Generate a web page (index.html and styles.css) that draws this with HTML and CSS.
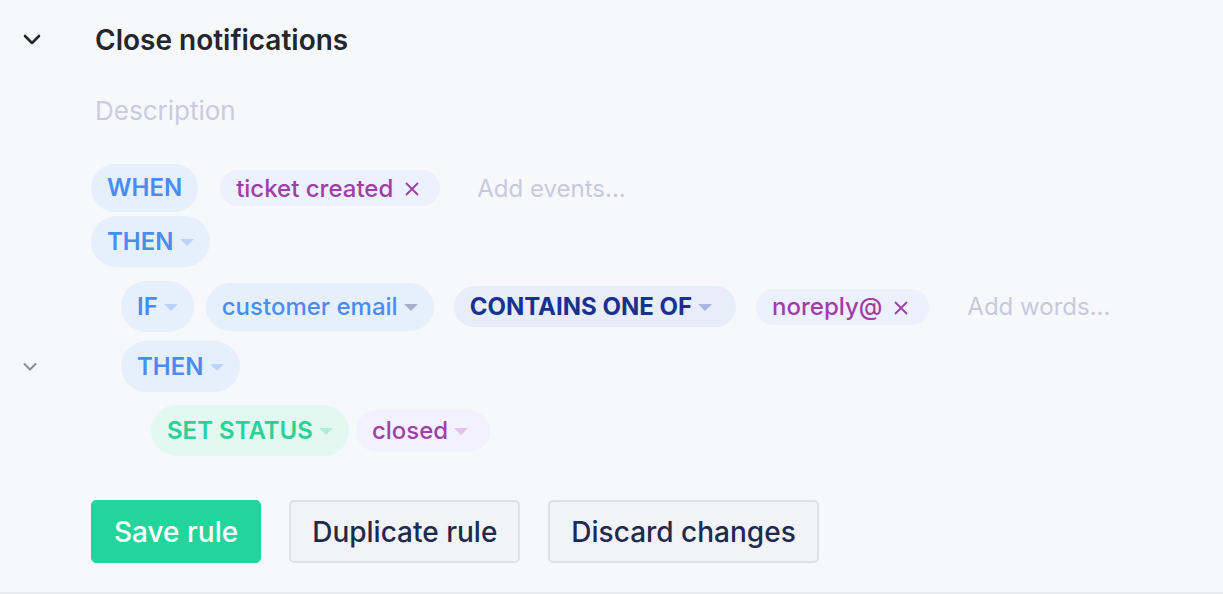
FILE: index.html
```html
<!DOCTYPE html>
<html>
<head>
<meta charset="utf-8">
<link rel="stylesheet" href="styles.css">
</head>
<body>
<div class="rule">
  <div class="head">
    <div class="gutter">
      <svg class="chev-big" width="20" height="12" viewBox="0 0 20 12"><path d="M3 2 L10 9 L17 2" fill="none" stroke="#24262b" stroke-width="2.6" stroke-linecap="round" stroke-linejoin="round"/></svg>
    </div>
    <h2 class="title">Close notifications</h2>
  </div>
  <div class="desc">Description</div>

  <div class="row row-when">
    <div class="gutter"></div>
    <span class="pill kw kw-when">WHEN</span>
    <span class="tag">ticket created<svg class="x" width="14" height="14" viewBox="0 0 14 14"><path d="M1.5 1.5 L12.5 12.5 M12.5 1.5 L1.5 12.5" stroke="#a13ea6" stroke-width="1.8" stroke-linecap="round"/></svg></span>
    <span class="ph ph-events">Add events...</span>
  </div>
  <div class="row row-then">
    <div class="gutter"></div>
    <span class="pill kw">THEN<i class="caret c-blue"></i></span>
  </div>

  <div class="row row-if">
    <div class="gutter"></div>
    <div class="indent"></div>
    <span class="pill kw">IF<i class="caret c-blue"></i></span>
    <span class="pill field">customer email<i class="caret c-gray"></i></span>
    <span class="pill op">CONTAINS ONE OF<i class="caret c-op"></i></span>
    <span class="tag tag-word">noreply@<svg class="x" width="14" height="14" viewBox="0 0 14 14"><path d="M1.5 1.5 L12.5 12.5 M12.5 1.5 L1.5 12.5" stroke="#a13ea6" stroke-width="1.8" stroke-linecap="round"/></svg></span>
    <span class="ph ph-words">Add words...</span>
  </div>
  <div class="row row-then2">
    <div class="gutter">
      <svg class="chev-small" width="16" height="10" viewBox="0 0 16 10"><path d="M2.5 2 L8 7.5 L13.5 2" fill="none" stroke="#8b8d93" stroke-width="2" stroke-linecap="round" stroke-linejoin="round"/></svg>
    </div>
    <div class="indent"></div>
    <span class="pill kw">THEN<i class="caret c-blue"></i></span>
  </div>
  <div class="row row-set">
    <div class="gutter"></div>
    <div class="indent"></div>
    <div class="indent"></div>
    <span class="pill action">SET STATUS<i class="caret c-green"></i></span>
    <span class="pill value">closed<i class="caret c-pink"></i></span>
  </div>

  <div class="row buttons">
    <div class="gutter"></div>
    <button class="btn btn-save">Save rule</button>
    <button class="btn btn-sec">Duplicate rule</button>
    <button class="btn btn-sec">Discard changes</button>
  </div>
</div>
</body>
</html>
```

FILE: styles.css
```css
* { box-sizing: border-box; }
html, body {
  margin: 0;
  padding: 0;
  background: #f7f8fc;
}
body {
  font-family: Inter, "Noto Sans", "Liberation Sans", sans-serif;
  -webkit-font-smoothing: antialiased;
}
.rule {
  height: 594px;
  border-bottom: 2px solid #e9ebf0;
  padding-top: 20px;
}
.gutter {
  width: 91px;
  flex: none;
  display: flex;
  align-items: center;
  padding-left: 22px;
}
.indent { width: 30px; flex: none; }
.head {
  display: flex;
  align-items: center;
  height: 40px;
}
.title {
  margin: 0 0 0 4px;
  font-size: 28px;
  font-weight: 600;
  color: #24262b;
}
.desc {
  margin: 35px 0 0 95px;
  font-size: 26px;
  line-height: 32px;
  color: #c8cce0;
}
.row {
  display: flex;
  align-items: center;
}
.row-when { margin-top: 37px; height: 48px; }
.row-then { margin-top: 4px; height: 51px; }
.row-if { margin-top: 14px; height: 51px; }
.row-then2 { margin-top: 9px; height: 51px; }
.row-set { margin-top: 13px; height: 51px; }
.buttons { margin-top: 44px; height: 63px; }

.pill {
  display: inline-flex;
  align-items: center;
  border-radius: 999px;
  font-size: 24px;
  line-height: 28px;
  white-space: nowrap;
  flex: none;
}
.kw {
  height: 51px;
  padding: 0 16px;
  background: #e6f0fd;
  color: #4a8cf6;
  font-weight: 600;
}
.kw-when { height: 48px; }
.caret {
  display: inline-block;
  width: 0;
  height: 0;
  margin-left: 6px;
  border-left: 7px solid transparent;
  border-right: 7px solid transparent;
  border-top: 7px solid #b9d3fb;
  margin-top: 2px;
}
.c-blue { border-top-color: #b9d3fb; }
.c-gray { border-top-color: #a9afca; }
.c-op { border-top-color: #a8b8de; }
.c-green { border-top-color: #b1edd6; }
.c-pink { border-top-color: #e3c2ea; }

.field {
  margin-left: 12px;
  height: 48px;
  padding: 0 16px;
  background: #e6f0fd;
  color: #4a8cf6;
  font-weight: 500;
}
.op {
  margin-left: 20px;
  height: 41px;
  padding: 0 24px 0 16px;
  background: #e7edf9;
  color: #19318f;
  font-weight: 700;
}
.tag {
  display: inline-flex;
  align-items: center;
  height: 36px;
  border-radius: 999px;
  padding: 0 21px 0 16px;
  background: #edf0fd;
  color: #a13ea6;
  font-size: 24px;
  font-weight: 500;
  margin-left: 22px;
  white-space: nowrap;
  flex: none;
}
.tag .x {
  margin-left: 12px;
  margin-top: 2px;
  flex: none;
}
.tag-word { margin-left: 20px; }
.ph {
  font-size: 24px;
  color: #c7cadb;
  font-weight: 400;
  white-space: nowrap;
}
.ph-events { margin-left: 37px; }
.ph-words { margin-left: 38px; }

.action {
  height: 51px;
  padding: 0 16px;
  background: #e2f8f0;
  color: #2cd196;
  font-weight: 600;
}
.value {
  margin-left: 7px;
  height: 42px;
  padding: 0 22px 0 16px;
  background: #f3f1fd;
  color: #a23fa7;
  font-weight: 500;
}

.btn {
  height: 63px;
  border-radius: 5px;
  font-family: inherit;
  font-size: 28px;
  font-weight: 500;
  padding: 0 22px;
  margin-right: 28px;
  cursor: pointer;
}
.btn-save {
  background: #24d59b;
  border: 1px solid #24d59b;
  color: #ffffff;
}
.btn-sec {
  background: #f2f3f6;
  border: 2px solid #dfe1e6;
  color: #1e2a4f;
  padding: 0 21px;
}
```
